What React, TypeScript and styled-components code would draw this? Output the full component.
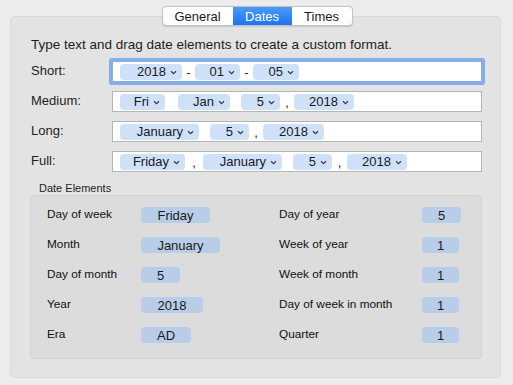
import React from "react";
import styled, { createGlobalStyle } from "styled-components";

const GlobalStyle = createGlobalStyle`
  html, body {
    margin: 0;
    padding: 0;
    background: #ececec;
  }
  body {
    font-family: "Liberation Sans", Arial, sans-serif;
    color: #1e1e1e;
    -webkit-font-smoothing: antialiased;
  }
`;

type Piece = { kind: "token"; text: string; w: number } | { kind: "sep"; text: string; w: number };

const formats: { label: string; focused?: boolean; pieces: Piece[] }[] = [
  {
    label: "Short:",
    focused: true,
    pieces: [
      { kind: "token", text: "2018", w: 62 },
      { kind: "sep", text: "-", w: 13 },
      { kind: "token", text: "01", w: 45 },
      { kind: "sep", text: "-", w: 13 },
      { kind: "token", text: "05", w: 46 },
    ],
  },
  {
    label: "Medium:",
    pieces: [
      { kind: "token", text: "Fri", w: 45 },
      { kind: "sep", text: "", w: 13 },
      { kind: "token", text: "Jan", w: 52 },
      { kind: "sep", text: "", w: 11 },
      { kind: "token", text: "5", w: 39 },
      { kind: "sep", text: ",", w: 14 },
      { kind: "token", text: "2018", w: 60 },
    ],
  },
  {
    label: "Long:",
    pieces: [
      { kind: "token", text: "January", w: 79 },
      { kind: "sep", text: "", w: 11 },
      { kind: "token", text: "5", w: 39 },
      { kind: "sep", text: ",", w: 14 },
      { kind: "token", text: "2018", w: 61 },
    ],
  },
  {
    label: "Full:",
    pieces: [
      { kind: "token", text: "Friday", w: 65 },
      { kind: "sep", text: ",", w: 18 },
      { kind: "token", text: "January", w: 79 },
      { kind: "sep", text: "", w: 11 },
      { kind: "token", text: "5", w: 39 },
      { kind: "sep", text: ",", w: 15 },
      { kind: "token", text: "2018", w: 60 },
    ],
  },
];

const leftElements = [
  { label: "Day of week", value: "Friday", w: 69 },
  { label: "Month", value: "January", w: 79 },
  { label: "Day of month", value: "5", w: 39 },
  { label: "Year", value: "2018", w: 62 },
  { label: "Era", value: "AD", w: 50 },
];

const rightElements = [
  { label: "Day of year", value: "5", w: 39 },
  { label: "Week of year", value: "1", w: 37 },
  { label: "Week of month", value: "1", w: 37 },
  { label: "Day of week in month", value: "1", w: 37 },
  { label: "Quarter", value: "1", w: 37 },
];

function Chevron() {
  return (
    <svg width="7" height="5" viewBox="0 0 7 5">
      <path d="M1 1.2 L3.5 3.6 L6 1.2" fill="none" stroke="#3a3a3a" strokeWidth="1.2" />
    </svg>
  );
}

function App() {
  return (
    <Window>
      <GlobalStyle />
      <Tabs>
        <Tab $w={70}>General</Tab>
        <Tab $w={59} $active>
          Dates
        </Tab>
        <Tab $w={60}>Times</Tab>
      </Tabs>
      <Panel>
        <Intro>Type text and drag date elements to create a custom format.</Intro>
        <FormatGrid>
          {formats.map((f) => (
            <React.Fragment key={f.label}>
              <FormatLabel>{f.label}</FormatLabel>
              <Field $focused={f.focused}>
                {f.pieces.map((p, i) =>
                  p.kind === "token" ? (
                    <Token key={i} $w={p.w}>
                      <span>{p.text}</span>
                      <Chevron />
                    </Token>
                  ) : (
                    <Sep key={i} $w={p.w}>
                      {p.text}
                    </Sep>
                  ),
                )}
              </Field>
            </React.Fragment>
          ))}
        </FormatGrid>
        <SectionTitle>Date Elements</SectionTitle>
        <ElementsBox>
          <ElementColumn $labelW={94}>
            {leftElements.map((e) => (
              <React.Fragment key={e.label}>
                <ElementLabel>{e.label}</ElementLabel>
                <Pill $w={e.w}>{e.value}</Pill>
              </React.Fragment>
            ))}
          </ElementColumn>
          <ElementColumn $labelW={143}>
            {rightElements.map((e) => (
              <React.Fragment key={e.label}>
                <ElementLabel>{e.label}</ElementLabel>
                <Pill $w={e.w}>{e.value}</Pill>
              </React.Fragment>
            ))}
          </ElementColumn>
        </ElementsBox>
      </Panel>
    </Window>
  );
}

const Window = styled.div`
  width: 513px;
  height: 385px;
  box-sizing: border-box;
  padding: 6px 12px 0 10px;
  display: flex;
  flex-direction: column;
`;

const Tabs = styled.div`
  align-self: center;
  margin-left: 3px;
  display: flex;
  height: 20px;
  box-sizing: border-box;
  border: 1px solid #c3c3c3;
  border-radius: 4px;
  background: #ffffff;
  overflow: hidden;
  margin-bottom: -10px;
  position: relative;
  z-index: 1;
  box-shadow: 0 0.5px 1px rgba(0, 0, 0, 0.12);
`;

const Tab = styled.div<{ $w: number; $active?: boolean }>`
  width: ${(p) => p.$w}px;
  display: flex;
  align-items: center;
  justify-content: center;
  font-size: 13px;
  color: ${(p) => (p.$active ? "#ffffff" : "#1a1a1a")};
  background: ${(p) => (p.$active ? "linear-gradient(#4b9af9, #1c74f1)" : "transparent")};
`;

const Panel = styled.div`
  height: 362px;
  box-sizing: border-box;
  background: #e3e3e3;
  border: 1px solid #d9d9d9;
  border-radius: 5px;
  padding: 20px 19px 0 20px;
  display: flex;
  flex-direction: column;
`;

const Intro = styled.div`
  font-size: 13.5px;
  line-height: 16px;
  margin-bottom: 8px;
`;

const FormatGrid = styled.div`
  display: grid;
  grid-template-columns: 81px 370px;
  grid-auto-rows: 21px;
  row-gap: 9px;
`;

const FormatLabel = styled.div`
  font-size: 13px;
  line-height: 19px;
`;

const Field = styled.div<{ $focused?: boolean }>`
  box-sizing: border-box;
  background: #ffffff;
  border: 1px solid #b5b5b5;
  display: flex;
  align-items: center;
  padding-left: 7px;
  ${(p) =>
    p.$focused &&
    `
    border-color: #86aee6;
    box-shadow: 0 0 0 3px #85ade9;
    border-radius: 1px;
  `}
`;

const Token = styled.div<{ $w: number }>`
  width: ${(p) => p.$w}px;
  height: 16px;
  box-sizing: border-box;
  background: #cfe1f9;
  border-radius: 4px;
  display: flex;
  align-items: center;
  justify-content: flex-end;
  gap: 4px;
  padding-right: 5px;
  font-size: 13px;
  color: #1a1a1a;

  & > svg {
    margin-top: 1px;
  }
`;

const Sep = styled.div<{ $w: number }>`
  width: ${(p) => p.$w}px;
  text-align: center;
  font-size: 13px;
  line-height: 16px;
  padding-top: 2px;
`;

const SectionTitle = styled.div`
  font-size: 11px;
  line-height: 13px;
  margin: 10px 0 0 8px;
`;

const ElementsBox = styled.div`
  margin-left: -1px;
  width: 452px;
  height: 164px;
  box-sizing: border-box;
  background: #dcdcdc;
  border: 1px solid #d3d3d3;
  border-radius: 4px;
  padding: 11px 0 0 16px;
  display: grid;
  grid-template-columns: 232px auto;
`;

const ElementColumn = styled.div<{ $labelW: number }>`
  display: grid;
  grid-template-columns: ${(p) => p.$labelW}px auto;
  grid-auto-rows: 16px;
  row-gap: 14px;
  align-content: start;
`;

const ElementLabel = styled.div`
  font-size: 11.8px;
  line-height: 15px;
  color: #111;
`;

const Pill = styled.div<{ $w: number }>`
  width: ${(p) => p.$w}px;
  height: 16px;
  border-radius: 4px;
  background: #b8cde7;
  font-size: 13px;
  line-height: 17px;
  text-align: center;
  color: #1a1a1a;
`;

export default App;
